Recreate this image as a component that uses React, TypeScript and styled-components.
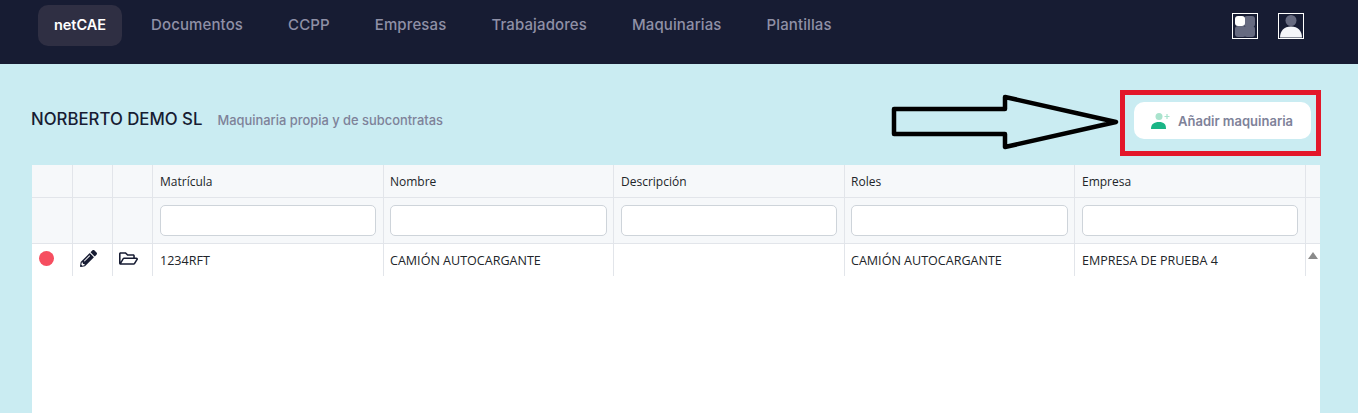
import React from 'react'
import styled, { createGlobalStyle } from 'styled-components'
import { FaPencilAlt, FaRegFolderOpen } from 'react-icons/fa'

const navItems = ['Documentos', 'CCPP', 'Empresas', 'Trabajadores', 'Maquinarias', 'Plantillas']
const columns = ['Matrícula', 'Nombre', 'Descripción', 'Roles', 'Empresa']
const row = ['1234RFT', 'CAMIÓN AUTOCARGANTE', '', 'CAMIÓN AUTOCARGANTE', 'EMPRESA DE PRUEBA 4']

const App: React.FC = () => {
  return (
    <>
      <GlobalStyle />
      <Header>
        <Nav>
          <Brand>netCAE</Brand>
          {navItems.map((item) => (
            <NavItem key={item}>{item}</NavItem>
          ))}
        </Nav>
        <HeaderIcons>
          <IconFrame>
            <svg width="24" height="24" viewBox="0 0 24 24">
              <rect x="11" y="2" width="11" height="11" rx="3" fill="#666a80" />
              <rect x="2" y="12" width="11" height="11" rx="3" fill="#666a80" />
              <rect x="11" y="12" width="11" height="11" rx="3" fill="#666a80" />
              <rect x="2" y="2" width="10" height="10" rx="3" fill="#ffffff" />
            </svg>
          </IconFrame>
          <IconFrame>
            <svg width="24" height="24" viewBox="0 0 24 24">
              <circle cx="12" cy="6.5" r="5.5" fill="#666a80" />
              <path d="M1 23.5C1 17 5 12.5 12 12.5S23 17 23 23.5Z" fill="#f4f5f9" />
            </svg>
          </IconFrame>
        </HeaderIcons>
      </Header>
      <Main>
        <Toolbar>
          <Heading>
            <Title>NORBERTO DEMO SL</Title>
            <Subtitle>Maquinaria propia y de subcontratas</Subtitle>
          </Heading>
          <Highlight>
            <Arrow width="232" height="58" viewBox="0 0 232 58">
              <path
                d="M6 16H117V4L228 29L117 54V41H6Z"
                fill="none"
                stroke="#000000"
                strokeWidth="4.5"
                strokeLinejoin="round"
              />
            </Arrow>
            <AddButton>
              <svg width="20" height="18" viewBox="0 0 20 18">
                <circle cx="8" cy="4.5" r="3.5" fill="#a9e3cd" />
                <path d="M0 17C0 12 3 10 8 10S15 12 15 17Z" fill="#1bb586" />
                <path d="M16 2V7M13.5 4.5H18.5" stroke="#a9e3cd" strokeWidth="1.2" />
              </svg>
              Añadir maquinaria
            </AddButton>
          </Highlight>
        </Toolbar>
        <Table>
          <HeadCell />
          <HeadCell />
          <HeadCell />
          {columns.map((column, index) => (
            <HeadCell key={column} $tight={index % 2 === 1}>
              {column}
            </HeadCell>
          ))}
          <HeadCell $last />

          <FilterCell />
          <FilterCell />
          <FilterCell />
          {columns.map((column, index) => (
            <FilterCell key={column} $tight={index % 2 === 1}>
              <FilterInput aria-label={column} />
            </FilterCell>
          ))}
          <FilterCell $last />

          <IconCell>
            <StatusDot />
          </IconCell>
          <IconCell>
            <FaPencilAlt size={17} color="#171c33" />
          </IconCell>
          <IconCell>
            <FaRegFolderOpen size={19} color="#171c33" />
          </IconCell>
          {row.map((value, index) => (
            <DataCell key={index} $tight={index % 2 === 1}>
              {value}
            </DataCell>
          ))}
          <ScrollCell>
            <ScrollArrow />
          </ScrollCell>
        </Table>
      </Main>
    </>
  )
}

const GlobalStyle = createGlobalStyle`
  html, body {
    margin: 0;
    height: 413px;
    overflow: hidden;
    background: #caecf2;
  }
`

const Header = styled.header`
  display: flex;
  align-items: flex-start;
  justify-content: space-between;
  box-sizing: border-box;
  height: 64px;
  padding: 5px 54px 0 38px;
  background: #171c33;
  font-family: 'Inter', sans-serif;
`

const Nav = styled.nav`
  display: flex;
  align-items: center;
  gap: 45px;
  height: 41px;
`

const Brand = styled.div`
  display: flex;
  align-items: center;
  justify-content: center;
  width: 84px;
  height: 41px;
  margin-right: -16px;
  padding-bottom: 2px;
  box-sizing: border-box;
  border-radius: 10px;
  background: #2f2f43;
  color: #ffffff;
  font-size: 14.5px;
  font-weight: 600;
`

const NavItem = styled.div`
  padding-bottom: 2px;
  color: #8f90a6;
  font-size: 15px;
  font-weight: 500;
  letter-spacing: 0.12px;
`

const HeaderIcons = styled.div`
  display: flex;
  gap: 20px;
  padding-top: 8px;
`

const IconFrame = styled.div`
  display: flex;
  box-sizing: border-box;
  width: 26px;
  height: 26px;
  border: 1px solid #ffffff;
  align-items: center;
  justify-content: center;
`

const Main = styled.main`
  padding: 26px 38px 0 32px;
`

const Toolbar = styled.div`
  display: flex;
  align-items: center;
  justify-content: space-between;
  height: 66px;
  margin-bottom: 9px;
`

const Heading = styled.div`
  display: flex;
  align-items: baseline;
  gap: 15px;
  margin: 0 0 9px -1px;
  font-family: 'Inter', sans-serif;
`

const Title = styled.h1`
  margin: 0;
  color: #171c33;
  font-size: 16.8px;
  font-weight: 500;
`

const Subtitle = styled.span`
  color: #7e8299;
  font-size: 12.9px;
  font-weight: 500;
`

const Highlight = styled.div`
  position: relative;
  display: flex;
  box-sizing: border-box;
  width: 201px;
  height: 66px;
  margin-right: -1px;
  padding: 7px 5px 0 9px;
  border: 5px solid #e3172a;
`

const Arrow = styled.svg`
  position: absolute;
  top: -2px;
  right: 196px;
`

const AddButton = styled.button`
  display: flex;
  align-items: center;
  gap: 7px;
  box-sizing: border-box;
  width: 177px;
  height: 37px;
  padding: 0 0 0 17px;
  border: 0;
  border-radius: 10px;
  background: #ffffff;
  color: #7e8299;
  font-family: 'Inter', sans-serif;
  font-size: 13px;
  font-weight: 600;
`

const Table = styled.div`
  display: grid;
  grid-template-columns: 41px 40px 40px 231px 230px 231px 230px 231px 1fr;
  grid-template-rows: 33px 46px 32px 1fr;
  height: 248px;
  background: #ffffff;
  color: #212529;
  font-family: 'Open Sans', sans-serif;
  font-size: 12px;
`

const HeadCell = styled.div<{ $last?: boolean; $tight?: boolean }>`
  display: flex;
  align-items: center;
  box-sizing: border-box;
  padding-left: ${({ $tight }) => ($tight ? '6px' : '7px')};
  background: #f6f8fa;
  border-right: ${({ $last }) => ($last ? '0' : '1px solid #e2e5ea')};
  border-bottom: 1px solid #e2e5ea;
`

const FilterCell = styled(HeadCell)`
  padding-right: ${({ $tight }) => ($tight ? '6px' : '7px')};
`

const FilterInput = styled.input`
  box-sizing: border-box;
  width: 100%;
  height: 31px;
  border: 1px solid #ced4da;
  border-radius: 5px;
  background: #ffffff;
`

const DataCell = styled.div<{ $tight?: boolean }>`
  display: flex;
  align-items: center;
  box-sizing: border-box;
  padding-left: ${({ $tight }) => ($tight ? '6px' : '7px')};
  border-right: 1px solid #e2e5ea;
  font-size: 12.55px;
  white-space: nowrap;
`

const IconCell = styled(DataCell)`
  justify-content: center;
  padding: 0 9px 4px 0;
`

const StatusDot = styled.span`
  width: 15px;
  height: 15px;
  margin-right: 2px;
  border-radius: 50%;
  background: #f64e60;
`

const ScrollCell = styled.div`
  display: flex;
  justify-content: center;
  padding-top: 8px;
`

const ScrollArrow = styled.span`
  width: 0;
  height: 0;
  border-right: 5px solid transparent;
  border-bottom: 7px solid #8a8a8a;
  border-left: 5px solid transparent;
`

export default App
